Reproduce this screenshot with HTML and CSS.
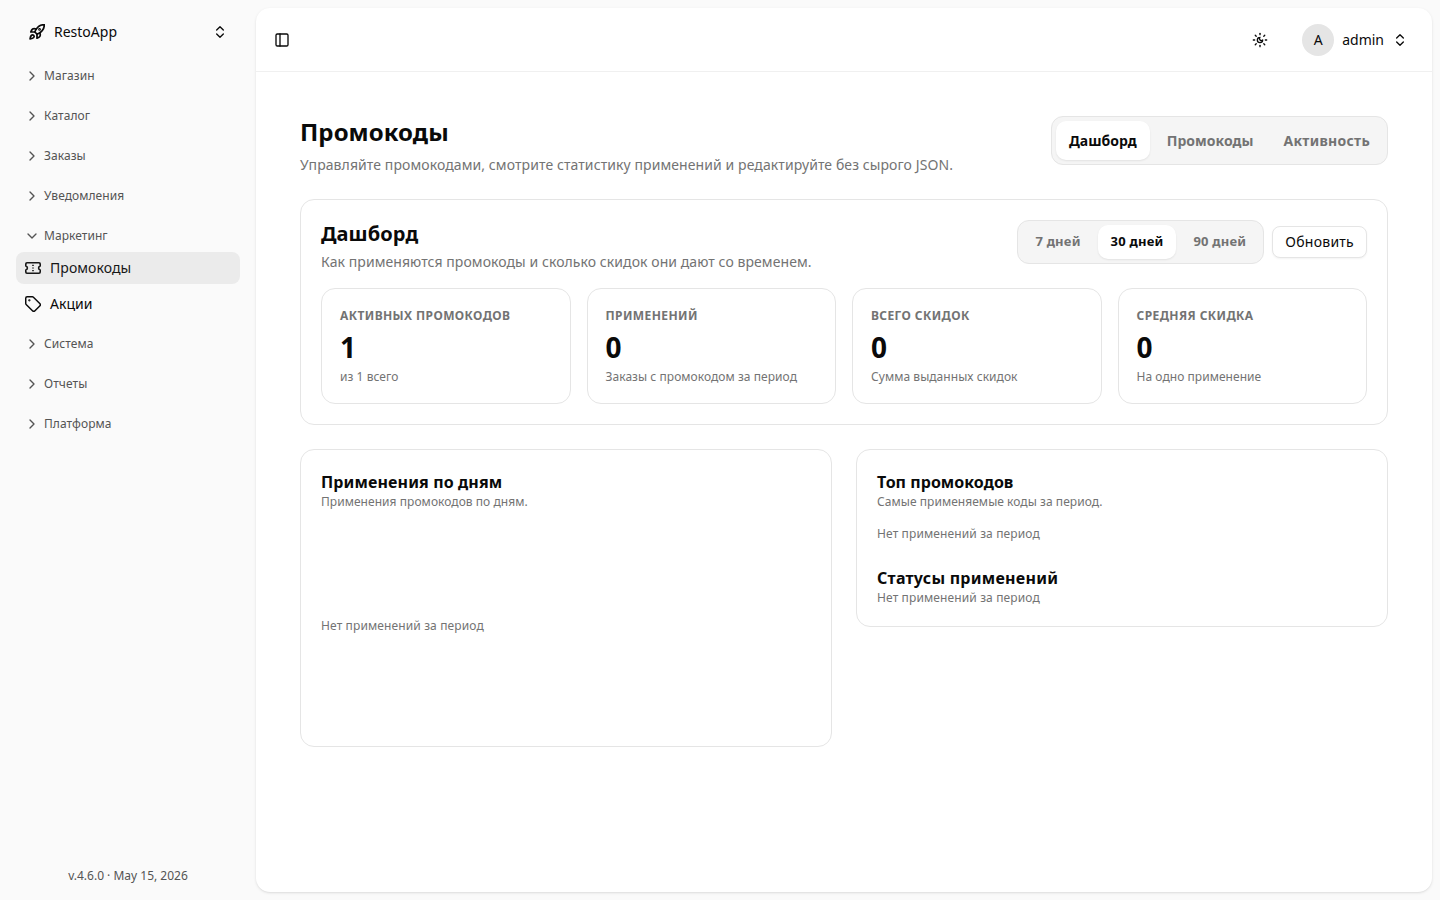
FILE: index.html
```html
<!DOCTYPE html>
<html lang="ru">

<head>
    <meta charset="UTF-8">
    <meta name="viewport" content="width=device-width, initial-scale=1.0">
    <title>Промокоды</title>
    <link rel="stylesheet" href="styles.css">
</head>

<body>
    <svg class="sprite">
        <symbol id="chevron" viewBox="0 0 24 24">
            <path d="m9 18 6-6-6-6" />
        </symbol>
        <symbol id="chevron-down" viewBox="0 0 24 24">
            <path d="m6 9 6 6 6-6" />
        </symbol>
        <symbol id="up-down" viewBox="0 0 24 24">
            <path d="m7 15 5 5 5-5" />
            <path d="m7 9 5-5 5 5" />
        </symbol>
    </svg>

    <aside class="sidebar">
        <div class="brand">
            <svg class="icon rocket" viewBox="1 1 22 22">
                <path d="M4.5 16.5c-1.5 1.26-2 5-2 5s3.74-.5 5-2c.71-.84.7-2.13-.09-2.91a2.18 2.18 0 0 0-2.91-.09z" />
                <path d="m12 15-3-3a22 22 0 0 1 2-3.95A12.88 12.88 0 0 1 22 2c0 2.72-.78 7.5-6 11a22.35 22.35 0 0 1-4 2z" />
                <path d="M9 12H3.5s1.05-3.03 2.5-4c1.62-1.08 5 0 5 0" />
                <path d="M12 15v5.5s3.03-1.05 4-2.5c1.08-1.62 0-5 0-5" />
                <circle cx="15.5" cy="8.5" r=".7" />
            </svg>
            <span class="brand-name">RestoApp</span>
            <svg class="icon"><use href="#up-down" /></svg>
        </div>

        <nav class="menu">
            <div class="group"><svg class="icon"><use href="#chevron" /></svg>Магазин</div>
            <div class="group"><svg class="icon"><use href="#chevron" /></svg>Каталог</div>
            <div class="group"><svg class="icon"><use href="#chevron" /></svg>Заказы</div>
            <div class="group"><svg class="icon"><use href="#chevron" /></svg>Уведомления</div>
            <div class="group open"><svg class="icon"><use href="#chevron-down" /></svg>Маркетинг</div>
            <div class="links">
                <a class="link active">
                    <svg class="icon ticket" viewBox="0 0 16 16">
                        <path d="M2 2.7h12a1.2 1.2 0 0 1 1.2 1.2V6a2.05 2.05 0 0 0 0 4v2.1a1.2 1.2 0 0 1-1.2 1.2H2A1.2 1.2 0 0 1 .8 12.1V10a2.05 2.05 0 0 0 0-4V3.9A1.2 1.2 0 0 1 2 2.7Z" />
                        <path d="M8 4.7v1.2M8 7.4v1.2M8 10.1v1.2" />
                    </svg>
                    Промокоды
                </a>
                <a class="link">
                    <svg class="icon" viewBox="1 1 22 22">
                        <path d="M12.586 2.586A2 2 0 0 0 11.172 2H4a2 2 0 0 0-2 2v7.172a2 2 0 0 0 .586 1.414l8.704 8.704a2.426 2.426 0 0 0 3.42 0l6.58-6.58a2.426 2.426 0 0 0 0-3.42z" />
                        <circle cx="7" cy="7" r=".6" fill="currentColor" />
                    </svg>
                    Акции
                </a>
            </div>
            <div class="group"><svg class="icon"><use href="#chevron" /></svg>Система</div>
            <div class="group"><svg class="icon"><use href="#chevron" /></svg>Отчеты</div>
            <div class="group"><svg class="icon"><use href="#chevron" /></svg>Платформа</div>
        </nav>

        <div class="version">v.4.6.0 · May 15, 2026</div>
    </aside>

    <main class="main">
        <header class="topbar">
            <svg class="icon" viewBox="0 0 24 24">
                <rect width="18" height="18" x="3" y="3" rx="2" />
                <path d="M9 3v18" />
            </svg>
            <div class="topbar-right">
                <svg class="icon" viewBox="0 0 24 24">
                    <path d="M12 8a2.83 2.83 0 0 0 4 4 4 4 0 1 1-4-4" />
                    <path d="M12 2v2" />
                    <path d="M12 20v2" />
                    <path d="m4.9 4.9 1.4 1.4" />
                    <path d="m17.7 17.7 1.4 1.4" />
                    <path d="M2 12h2" />
                    <path d="M20 12h2" />
                    <path d="m6.3 17.7-1.4 1.4" />
                    <path d="m19.1 4.9-1.4 1.4" />
                </svg>
                <div class="user">
                    <span class="avatar">A</span>
                    <span class="user-name">admin</span>
                    <svg class="icon"><use href="#up-down" /></svg>
                </div>
            </div>
        </header>

        <div class="content">
            <div class="page-head">
                <div>
                    <h1>Промокоды</h1>
                    <p class="subtitle">Управляйте промокодами, смотрите статистику применений и редактируйте без сырого JSON.</p>
                </div>
                <div class="tabs">
                    <button class="tab active">Дашборд</button>
                    <button class="tab">Промокоды</button>
                    <button class="tab">Активность</button>
                </div>
            </div>

            <section class="panel">
                <div class="panel-head">
                    <div>
                        <h2>Дашборд</h2>
                        <p class="subtitle">Как применяются промокоды и сколько скидок они дают со временем.</p>
                    </div>
                    <div class="actions">
                        <div class="tabs tabs-small">
                            <button class="tab">7 дней</button>
                            <button class="tab active">30 дней</button>
                            <button class="tab">90 дней</button>
                        </div>
                        <button class="refresh">Обновить</button>
                    </div>
                </div>
                <div class="stats">
                    <div class="stat">
                        <div class="stat-label">Активных промокодов</div>
                        <div class="stat-value">1</div>
                        <div class="note">из 1 всего</div>
                    </div>
                    <div class="stat">
                        <div class="stat-label">Применений</div>
                        <div class="stat-value">0</div>
                        <div class="note">Заказы с промокодом за период</div>
                    </div>
                    <div class="stat">
                        <div class="stat-label">Всего скидок</div>
                        <div class="stat-value">0</div>
                        <div class="note">Сумма выданных скидок</div>
                    </div>
                    <div class="stat">
                        <div class="stat-label">Средняя скидка</div>
                        <div class="stat-value">0</div>
                        <div class="note">На одно применение</div>
                    </div>
                </div>
            </section>

            <div class="columns">
                <section class="panel">
                    <h3>Применения по дням</h3>
                    <div class="note">Применения промокодов по дням.</div>
                    <div class="note empty chart">Нет применений за период</div>
                </section>
                <section class="panel">
                    <h3 class="top">Топ промокодов</h3>
                    <div class="note">Самые применяемые коды за период.</div>
                    <div class="note empty">Нет применений за период</div>
                    <h3 class="statuses">Статусы применений</h3>
                    <div class="note empty">Нет применений за период</div>
                </section>
            </div>
        </div>
    </main>
</body>

</html>
```

FILE: styles.css
```css
* {
    box-sizing: border-box;
}

body {
    margin: 0;
    height: 100vh;
    display: flex;
    overflow: hidden;
    background: #fafafa;
    color: #0a0a0a;
    font-family: "Noto Sans", sans-serif;
    font-size: 14px;
    line-height: 20px;
}

h1,
h2,
h3,
p {
    margin: 0;
}

button {
    font-family: inherit;
    border: 0;
}

.sprite {
    display: none;
}

.icon {
    width: 16px;
    height: 16px;
    flex-shrink: 0;
    fill: none;
    stroke: currentColor;
    stroke-width: 2;
    stroke-linecap: round;
    stroke-linejoin: round;
}

.rocket {
    stroke-width: 2.4;
}

.ticket {
    stroke-width: 1.6;
    stroke-linecap: butt;
}

/* Sidebar */
.sidebar {
    width: 256px;
    flex-shrink: 0;
    padding: 8px 16px;
    display: flex;
    flex-direction: column;
}

.brand {
    height: 48px;
    padding: 0 12px 0 13px;
    display: flex;
    align-items: center;
    gap: 9px;
}

.brand-name {
    flex: 1;
}

.menu {
    flex: 1;
    padding-top: 4px;
}

.group {
    height: 32px;
    margin-bottom: 8px;
    padding-left: 8px;
    display: flex;
    align-items: center;
    gap: 4px;
    font-size: 12px;
    letter-spacing: 0.06px;
    color: #545454;
}

.group.open {
    margin-bottom: 0;
}

.links {
    display: flex;
    flex-direction: column;
    gap: 4px;
    margin-bottom: 8px;
}

.link {
    height: 32px;
    padding-left: 9px;
    display: flex;
    align-items: center;
    gap: 9px;
    border-radius: 8px;
    letter-spacing: 0.06px;
}

.link.active {
    background: #ebebeb;
    color: #171717;
}

.version {
    padding-bottom: 8px;
    text-align: center;
    font-size: 12px;
    line-height: 17px;
    color: #545454;
}

/* Main area */
.main {
    flex: 1;
    margin: 8px 8px 8px 0;
    background: #fff;
    border-radius: 14px;
    box-shadow: 0 1px 3px rgba(0, 0, 0, 0.1), 0 1px 2px -1px rgba(0, 0, 0, 0.1);
}

.topbar {
    height: 64px;
    padding: 0 24px 0 18px;
    display: flex;
    align-items: center;
    justify-content: space-between;
    border-bottom: 1px solid #f0f0f0;
}

.topbar-right,
.user {
    display: flex;
    align-items: center;
}

.topbar-right {
    gap: 34px;
}

.user {
    gap: 8px;
}

.avatar {
    width: 32px;
    height: 32px;
    border-radius: 50%;
    background: #e5e5e5;
    text-align: center;
    line-height: 32px;
}

.content {
    padding: 44px;
}

.page-head,
.panel-head {
    display: flex;
    justify-content: space-between;
}

.page-head {
    margin-bottom: 24px;
}

h1 {
    font-size: 24px;
    line-height: 32px;
    letter-spacing: 0.06px;
    margin-bottom: 7px;
}

h2 {
    font-size: 20px;
    line-height: 27px;
    letter-spacing: 0.08px;
    margin-bottom: 5px;
}

h3 {
    font-size: 16px;
    line-height: 24px;
    letter-spacing: 0.12px;
}

h3.top {
    letter-spacing: 0.04px;
}

h3.statuses {
    margin-top: 24px;
    letter-spacing: 0.25px;
}

.subtitle {
    color: #737373;
    letter-spacing: 0.09px;
}

.panel .subtitle {
    letter-spacing: 0.07px;
}

.tabs {
    display: flex;
    align-self: flex-start;
    gap: 4px;
    padding: 4px;
    border: 1px solid #e5e5e5;
    border-radius: 12px;
    background: #f5f5f5;
}

.tab {
    padding: 10px 13px;
    border-radius: 10px;
    background: none;
    color: #737373;
    font-size: 14px;
    line-height: 19px;
    font-weight: 700;
    letter-spacing: 0.03px;
}

.tab:last-child {
    letter-spacing: 0.28px;
}

.tab.active {
    background: #fff;
    color: #0a0a0a;
    box-shadow: 0 1px 2px rgba(0, 0, 0, 0.08);
}

.tabs-small .tab {
    padding: 7px 13px 9px;
    font-size: 13px;
    line-height: 18px;
    letter-spacing: 0.2px;
}

.panel {
    padding: 20px;
    border: 1px solid #e5e5e5;
    border-radius: 14px;
}

.panel-head {
    margin-bottom: 16px;
}

.actions {
    display: flex;
    align-items: center;
    align-self: flex-start;
    gap: 8px;
}

.refresh {
    height: 32px;
    padding: 0 12px 2px;
    border: 1px solid #e5e5e5;
    border-radius: 8px;
    background: #fff;
    color: #0a0a0a;
    font-size: 14px;
    letter-spacing: 0.26px;
    box-shadow: 0 1px 2px rgba(0, 0, 0, 0.05);
}

.stats {
    display: grid;
    grid-template-columns: repeat(4, 1fr);
    gap: 16px;
}

.stat {
    height: 116px;
    padding: 18px;
    border: 1px solid #e5e5e5;
    border-radius: 14px;
}

.stat-label {
    color: #737373;
    font-size: 12px;
    line-height: 18px;
    font-weight: 700;
    letter-spacing: 0.4px;
    text-transform: uppercase;
}

.stat-value {
    margin: 3px 0;
    font-size: 28px;
    line-height: 38px;
    font-weight: 700;
}

.note {
    color: #737373;
    font-size: 12px;
    line-height: 16px;
    letter-spacing: 0.05px;
}

.empty {
    letter-spacing: 0.12px;
}

.columns {
    margin-top: 24px;
    display: grid;
    grid-template-columns: 1fr 1fr;
    align-items: start;
    gap: 24px;
}

.note + .empty {
    margin-top: 16px;
}

.chart {
    height: 200px;
    display: flex;
    align-items: center;
}
```
